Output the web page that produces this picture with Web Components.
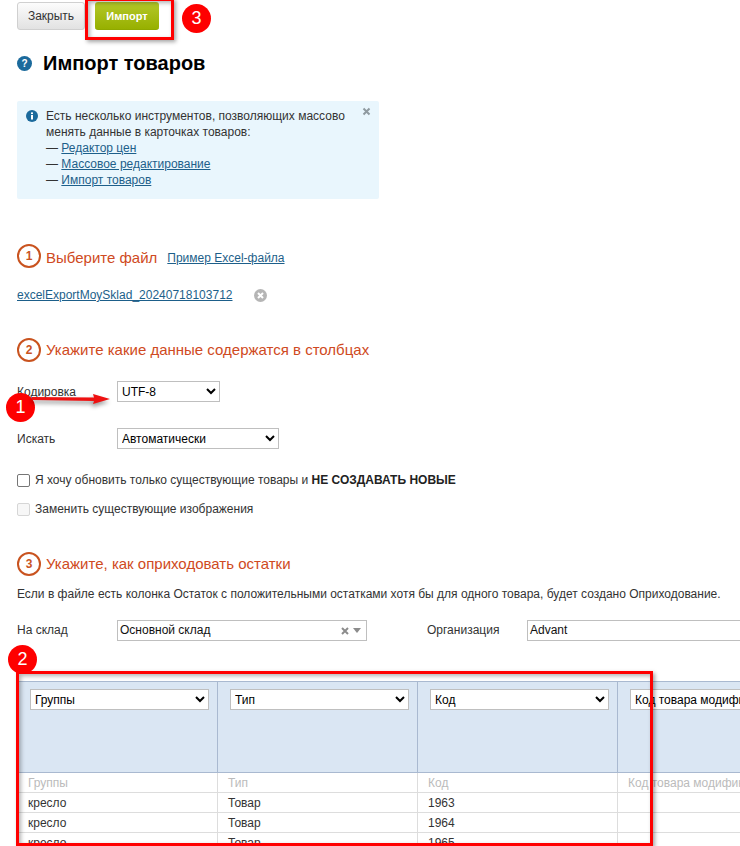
<!DOCTYPE html>
<html lang="ru"><head><meta charset="utf-8"><title>Импорт товаров</title>
<style>
html,body{margin:0;padding:0;background:#fff}
body{width:740px;height:846px;overflow:hidden;position:relative;font:12px/16px "Liberation Sans",Arial,sans-serif;color:#333}
</style></head>
<body>
<import-page></import-page>
<mark-box style="left:85px;top:-2px;width:89px;height:42px"></mark-box>
<mark-box style="left:16px;top:671px;width:637px;height:175px"></mark-box>
<mark-badge style="left:182px;top:4px">3</mark-badge>
<mark-badge style="left:6px;top:393px">1</mark-badge>
<mark-badge style="left:8px;top:645px">2</mark-badge>
<mark-arrow style="left:32px;top:391px"></mark-arrow>

<script>
const def=(name,html,init)=>customElements.define(name,class extends HTMLElement{
  constructor(){super();this.attachShadow({mode:'open'}).innerHTML=html;}
  connectedCallback(){init&&init(this)}
});

def('mark-box',`<style>:host{position:absolute;display:block;box-sizing:border-box;border:3px solid #f00;box-shadow:2px 2px 4px rgba(0,0,0,.35),inset 2px 2px 4px rgba(0,0,0,.3);pointer-events:none}</style>`);
def('mark-badge',`<style>:host{position:absolute;display:flex;align-items:center;justify-content:center;width:29px;height:29px;border-radius:50%;background:#fe0000;color:#fff;font:18px/29px "Liberation Sans",Arial,sans-serif}</style><slot></slot>`);
def('mark-arrow',`<style>:host{position:absolute;display:block;width:82px;height:16px}svg{display:block;filter:drop-shadow(-1px 3px 2px rgba(0,0,0,.4))}</style>
<svg width="82" height="16" viewBox="0 0 82 16"><path d="M0 6 L62 6.5 L61 3 L78 8 L61 13 L62 10 L0 9Z" fill="#ee1111"/></svg>`);

def('ui-button',`<style>:host{display:inline-flex;align-items:center;justify-content:center;box-sizing:border-box;width:68px;height:28px;border-radius:3px;border:1px solid #d0d0d0;background:linear-gradient(#fcfcfc,#e2e2e2);color:#333;font:12px/16px "Liberation Sans",Arial,sans-serif}
:host([primary]){width:64px;border:0;border-bottom:1px solid #8fa800;background:linear-gradient(#b4c82a,#97b000);color:#fff;font:bold 11px/16px "Liberation Sans",Arial,sans-serif}</style><slot></slot>`);

def('tool-bar',`<style>:host{display:flex;gap:10px;padding:2px 0 0 17px}</style><slot></slot>`);

def('page-title',`<style>:host{display:flex;align-items:center;gap:11px;padding:21px 0 0 17px;height:25px;color:#000;font:bold 20px/25px "Liberation Sans",Arial,sans-serif}svg{display:block}</style>
<svg width="15" height="15" viewBox="0 0 15 15"><circle cx="7.5" cy="7.5" r="7.5" fill="#1b6a9c"/><text x="7.5" y="11" text-anchor="middle" fill="#fff" font-family="Liberation Sans" font-weight="bold" font-size="10">?</text></svg><slot></slot>`);

def('info-box',`<style>:host{display:block;box-sizing:border-box;position:relative;margin:25px 0 0 17px;width:362px;height:98px;background:#e9f6fd;border-radius:2px;padding:7px 20px 0 29px;color:#333;font:12px/16px "Liberation Sans",Arial,sans-serif}
.i{position:absolute;left:9px;top:9px;display:block}.x{position:absolute;right:8px;top:6px;display:block}</style>
<svg class="i" width="12" height="12" viewBox="0 0 12 12"><circle cx="6" cy="6" r="6" fill="#1b6a9c"/><rect x="5" y="5" width="2" height="4.5" fill="#fff"/><rect x="5" y="2.4" width="2" height="1.7" fill="#fff"/></svg>
<svg class="x" width="9" height="9" viewBox="0 0 9 9"><path d="M1.5 1.5L7.5 7.5M7.5 1.5L1.5 7.5" stroke="#8f9aa0" stroke-width="2"/></svg><slot></slot>`);

def('ui-link',`<style>:host{display:inline;color:#1d5f8a;text-decoration:underline}</style><slot></slot>`);

def('step-heading',`<style>:host{display:flex;align-items:center;height:26px;padding-left:17px;color:#cf4a22;font:15px/26px "Liberation Sans",Arial,sans-serif}
b{box-sizing:border-box;width:24px;height:24px;border:2px solid #c9531f;border-radius:50%;display:flex;align-items:center;justify-content:center;font:bold 12px/1 "Liberation Sans",Arial,sans-serif;margin-right:5px;color:#c9531f}
.t{display:block}:host([low]) .t{padding-top:3px}
.more{margin-left:10px;font-size:12px}</style><b></b><span class="t"><slot></slot></span><span class="t more"><slot name="more"></slot></span>`,
 el=>{el.shadowRoot.querySelector('b').textContent=el.getAttribute('n')});

def('file-row',`<style>:host{display:flex;align-items:center;height:16px;margin:18px 0 0 17px;gap:21px;font:12px/16px "Liberation Sans",Arial,sans-serif}svg{display:block}</style><slot></slot>
<svg width="13" height="13" viewBox="0 0 13 13"><circle cx="6.5" cy="6.5" r="6.5" fill="#b5b5b5"/><path d="M4 4L9 9M9 4L4 9" stroke="#fff" stroke-width="2"/></svg>`);

def('form-row',`<style>:host{display:flex;align-items:center;padding-left:17px;color:#333;font:12px/16px "Liberation Sans",Arial,sans-serif}
.l{width:100px;flex:none}</style><span class="l"><slot name="label"></slot></span><slot></slot>`);

def('ui-select',`<style>:host{display:inline-block;flex:none}
select{display:block;box-sizing:border-box;width:100%;height:100%;font:12px "Liberation Sans",Arial,sans-serif;color:#000;background:#fff;border:1px solid #bfbfbf;border-radius:0;padding:0;margin:0;outline:0}</style><select></select>`,
 el=>{const s=el.shadowRoot.querySelector('select');if(s.options.length)return;const o=document.createElement('option');o.textContent=el.getAttribute('value');s.append(o);});

def('combo-box',`<style>:host{box-sizing:border-box;flex:none;display:flex;align-items:center;height:21px;border:1px solid #bfbfbf;background:#fff;color:#111;padding:0 5px 0 2px;font:12px/16px "Liberation Sans",Arial,sans-serif}
.t{flex:1;white-space:nowrap;padding-bottom:1px}</style><span class="t"><slot></slot></span><slot name="tools"></slot>`);
def('combo-tools',`<style>:host{display:flex;align-items:center;gap:4px}svg{display:block}</style>
<svg width="8" height="8" viewBox="0 0 8 8"><path d="M1 1L7 7M7 1L1 7" stroke="#8c8c8c" stroke-width="2"/></svg>
<svg width="8" height="5" viewBox="0 0 8 5"><path d="M0 0H8L4 5Z" fill="#8c8c8c"/></svg>`);

def('check-row',`<style>:host{display:flex;align-items:center;padding-left:17px;height:16px;color:#333;font:12px/16px "Liberation Sans",Arial,sans-serif}
i{box-sizing:border-box;width:13px;height:13px;border:1px solid #767676;border-radius:2px;background:#fff;margin-right:5px;flex:none}
:host([disabled]) i{border-color:#d6d6d6;background:#f7f7f7}::slotted(b){color:#222}</style><i></i><span><slot></slot></span>`);

def('import-table',`<style>:host{display:block;margin:40px 0 0 18px;width:860px;font:12px/16px "Liberation Sans",Arial,sans-serif;color:#333}
.g{display:grid;grid-template-columns:repeat(4,200px)}
.h{box-sizing:border-box;height:92px;background:#dae6f3;border-top:1px solid #a9b9d0;border-bottom:1px solid #a9b9d0;border-right:1px solid #a9b9d0;padding:7px 0 0 12px}
ui-select{width:179px;height:21px;display:block}
.c{box-sizing:border-box;height:20px;border-bottom:1px solid #ddd;border-right:1px solid #ddd;padding:2px 0 0 10px;white-space:nowrap;overflow:hidden}
.m{color:#bbb}</style><div class="g" id="g"></div>`,
 el=>{
  const g=el.shadowRoot.getElementById('g');if(g.children.length)return;
  const cols=['Группы','Тип','Код','Код товара модификации'];
  const rows=[['кресло','Товар','1963',''],['кресло','Товар','1964',''],['кресло','Товар','1965','']];
  cols.forEach(c=>{const d=document.createElement('div');d.className='h';const s=document.createElement('ui-select');s.setAttribute('value',c);d.append(s);g.append(d)});
  cols.forEach(c=>{const d=document.createElement('div');d.className='c m';d.textContent=c;g.append(d)});
  rows.flat().forEach(c=>{const d=document.createElement('div');d.className='c';d.textContent=c;g.append(d)});
 });

def('import-page',`<style>:host{display:block}
.s1{margin-top:44px}.s2{margin-top:34px}.s3{margin-top:34px}
.r1{margin-top:18px}.r2{margin-top:26px}.c1{margin-top:23px}.c2{margin-top:13px}
.note{margin:9px 0 0 17px;white-space:nowrap;color:#333}
.r3{margin-top:18px;align-items:flex-start}
.lb{display:block;padding-top:2px}
.sp{width:60px;flex:none}.l2{width:100px;flex:none}</style>
<tool-bar><ui-button>Закрыть</ui-button><ui-button primary>Импорт</ui-button></tool-bar>
<page-title>Импорт товаров</page-title>
<info-box>Есть несколько инструментов, позволяющих массово<br>менять данные в карточках товаров:<br>— <ui-link>Редактор цен</ui-link><br>— <ui-link>Массовое редактирование</ui-link><br>— <ui-link>Импорт товаров</ui-link></info-box>
<step-heading class="s1" n="1" low>Выберите файл<ui-link slot="more">Пример Excel-файла</ui-link></step-heading>
<file-row><ui-link>excelExportMoySklad_20240718103712</ui-link></file-row>
<step-heading class="s2" n="2">Укажите какие данные содержатся в столбцах</step-heading>
<form-row class="r1"><span slot="label">Кодировка</span><ui-select value="UTF-8" style="width:103px;height:21px"></ui-select></form-row>
<form-row class="r2"><span slot="label">Искать</span><ui-select value="Автоматически" style="width:162px;height:21px"></ui-select></form-row>
<check-row class="c1">Я хочу обновить только существующие товары и <b>НЕ СОЗДАВАТЬ НОВЫЕ</b></check-row>
<check-row class="c2" disabled>Заменить существующие изображения</check-row>
<step-heading class="s3" n="3">Укажите, как оприходовать остатки</step-heading>
<div class="note">Если в файле есть колонка Остаток с положительными остатками хотя бы для одного товара, будет создано Оприходование.</div>
<form-row class="r3"><span slot="label" class="lb">На склад</span><combo-box style="width:250px">Основной склад<combo-tools slot="tools"></combo-tools></combo-box><span class="sp"></span><span class="l2 lb">Организация</span><combo-box style="width:300px">Advant</combo-box></form-row>
<import-table></import-table>`);
</script>
</body></html>
